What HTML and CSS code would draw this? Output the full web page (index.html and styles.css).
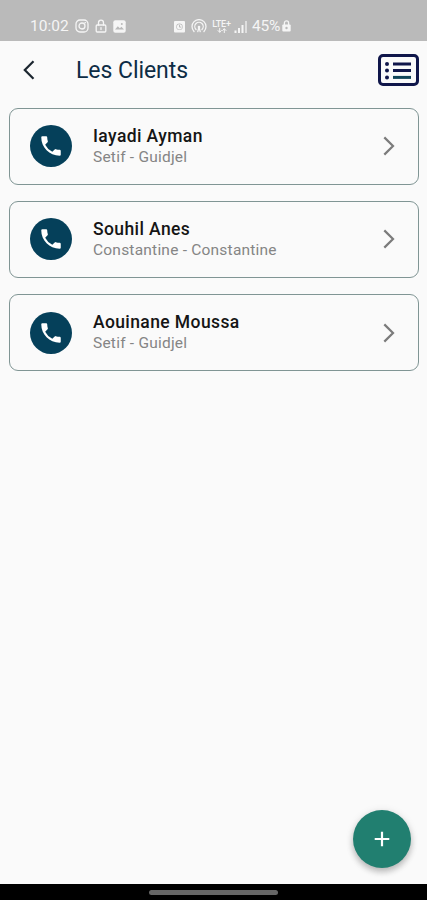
FILE: index.html
```html
<!DOCTYPE html>
<html lang="fr">
<head>
<meta charset="utf-8">
<title>Les Clients</title>
<link rel="stylesheet" href="styles.css">
</head>
<body>
<svg width="0" height="0" class="defs">
  <symbol id="phone" viewBox="0 0 24 24"><path d="M20 15.5c-1.25 0-2.45-.2-3.57-.57a1 1 0 0 0-1.02.24l-2.2 2.2a15.05 15.05 0 0 1-6.59-6.58l2.2-2.21a.96.96 0 0 0 .25-1A11.36 11.36 0 0 1 8.5 4a1 1 0 0 0-1-1H4a1 1 0 0 0-1 1c0 9.39 7.61 17 17 17a1 1 0 0 0 1-1v-3.5a1 1 0 0 0-1-1z"/></symbol>
  <symbol id="chevron" viewBox="0 0 12 20"><path d="M1.3 1.4 10 10 1.3 18.6"/></symbol>
</svg>
<div class="screen">
  <div class="status">
    <span class="time">10:02</span>
    <svg class="s-insta" viewBox="0 0 14 14" width="14" height="14"><rect x="1" y="1" width="12" height="12" rx="4"/><circle cx="7" cy="7" r="3"/><path d="M10 3.7h.5"/></svg>
    <svg class="s-lock" viewBox="0 0 12 14" width="12" height="14"><rect x="1.2" y="6" width="9.6" height="7" rx="1"/><path d="M3.5 6V3.7a2.5 2.5 0 0 1 5 0V6M6 8.6v2"/></svg>
    <svg class="s-image" viewBox="0 0 13 13" width="13" height="13"><rect class="solid" x=".3" y=".3" width="12.4" height="12.4" rx="2"/><path class="cut" d="m2 9.5 2.8-3.2 2 2 1.6-1.5L11 9.5z"/><circle class="cut" cx="8.8" cy="4" r="1"/></svg>
    <svg class="s-alarm" viewBox="0 0 13 13" width="13" height="13"><rect class="solid" x="1" y="1" width="11" height="11.5" rx="1"/><circle class="cut" cx="6.5" cy="6.8" r="3.2"/><circle class="solid" cx="6.5" cy="6.8" r="2.6"/><path class="hand" d="M6.5 5.2v1.9H8"/></svg>
    <svg class="s-hotspot" viewBox="0 0 16 14" width="16" height="14"><path d="M3 12.5a7 7 0 1 1 10 0M5 10.5a4.2 4.2 0 1 1 6 0M6.8 12.7 8 8l1.2 4.7"/><circle class="solid" cx="8" cy="8" r="1.3"/></svg>
    <span class="lte"><span>LTE+</span><svg viewBox="0 0 10 5" width="10" height="5"><path d="M2.7 0v4M1 2.5l1.7 1.8 1.7-1.8M7.3 5V1M5.6 2.5 7.3.7 9 2.5"/></svg></span>
    <svg class="s-signal" viewBox="0 0 14 13" width="14" height="13"><path d="M1.5 10.5V13M5 8v5M8.5 5v8"/><path class="faint" d="M12 1v12"/></svg>
    <span class="battery">45%</span>
    <svg class="s-charge" viewBox="0 0 9 12" width="9" height="12"><rect class="solid" x=".3" y="4.5" width="8.4" height="7" rx="1"/><path d="M2.4 5V3a2.1 2.1 0 0 1 4.2 0v2"/><circle class="cut" cx="4.5" cy="8" r="1.2"/></svg>
  </div>
  <header class="appbar">
    <svg class="back" viewBox="0 0 12 20" width="12" height="20"><path d="M10.5 1.2 1.8 10l8.7 8.8"/></svg>
    <h1>Les Clients</h1>
    <svg class="list-icon" viewBox="0 0 41 32" width="41" height="32"><rect x="1.5" y="1.5" width="38" height="29" rx="3.5"/><path d="M15 10h18M15 16.6h18"/><path class="teal" d="M15 23.4h18"/><path class="dots" d="M9 10h0M9 16.6h0M9 23.4h0"/></svg>
  </header>
  <main class="clients">
    <article class="card">
      <span class="call"><svg width="26" height="26"><use href="#phone"/></svg></span>
      <div class="info"><h2>Iayadi Ayman</h2><p>Setif - Guidjel</p></div>
      <svg class="chev" width="12" height="20"><use href="#chevron"/></svg>
    </article>
    <article class="card">
      <span class="call"><svg width="26" height="26"><use href="#phone"/></svg></span>
      <div class="info"><h2>Souhil Anes</h2><p>Constantine - Constantine</p></div>
      <svg class="chev" width="12" height="20"><use href="#chevron"/></svg>
    </article>
    <article class="card">
      <span class="call"><svg width="26" height="26"><use href="#phone"/></svg></span>
      <div class="info"><h2>Aouinane Moussa</h2><p>Setif - Guidjel</p></div>
      <svg class="chev" width="12" height="20"><use href="#chevron"/></svg>
    </article>
  </main>
  <button class="fab" aria-label="Ajouter"><svg viewBox="0 0 16 16" width="16" height="16"><path d="M8 .7v14.6M.7 8h14.6"/></svg></button>
  <div class="navbar"><span></span></div>
</div>
</body>
</html>
```
FILE: styles.css
```css
* { box-sizing: border-box; margin: 0; padding: 0; }
body { font-family: Roboto, "Liberation Sans", sans-serif; background: #fafafa; }
.defs { position: absolute; }
svg { display: block; flex: none; }
.screen { position: relative; width: 427px; height: 900px; display: flex; flex-direction: column; overflow: hidden; background: #fafafa; }

.status { height: 41px; flex: none; display: flex; align-items: center; padding: 11px 0 0 30px; background: #bababa; color: #f5f5f5; }
.status svg { fill: none; stroke: #f5f5f5; stroke-width: 1.3; stroke-linecap: round; }
.status .solid { fill: #f5f5f5; stroke: none; }
.status .cut { fill: #bababa; stroke: none; }
.status .hand { stroke: #bababa; stroke-width: 1; }
.status .faint { stroke: #dedede; }
.status .s-signal { stroke-width: 2; stroke-linecap: butt; margin-left: 2px; }
.time { width: 45px; font-size: 15.5px; white-space: nowrap; }
.s-lock { margin-left: 6px; }
.s-image { margin-left: 6px; }
.s-alarm { margin-left: 47px; }
.s-hotspot { margin-left: 5px; }
.lte { width: 21px; margin-left: 4px; display: flex; flex-direction: column; align-items: center; font-size: 9px; font-weight: 500; line-height: 8px; letter-spacing: -.2px; }
.lte svg { stroke-width: 1; }
.battery { width: 31px; margin-left: 4px; font-size: 15.5px; letter-spacing: -.2px; }
.s-charge { margin-left: -1px; }

.appbar { height: 66.7px; flex: none; display: flex; align-items: center; padding: 0 8px 8px 23px; }
.back { fill: none; stroke: #1c2630; stroke-width: 2.2; }
h1 { flex: 1; margin-left: 41px; padding-top: 2px; font-size: 23px; line-height: 28px; font-weight: 400; letter-spacing: -.05px; color: #0d2c45; }
.list-icon { fill: none; stroke: #10164a; stroke-width: 3; }
.list-icon .teal { stroke: #104558; }
.list-icon .dots { stroke-width: 4; stroke-linecap: round; }

.clients { flex: 1; display: flex; flex-direction: column; gap: 16.2px; padding: 0 8px 0 9px; }
.card { height: 77px; flex: none; display: flex; align-items: center; padding: 0 23px 0 20px; border: 1.3px solid #809594; border-radius: 9px; }
.call { width: 42px; height: 42px; flex: none; display: flex; align-items: center; justify-content: center; border-radius: 50%; background: #05405a; fill: #fff; }
.info { flex: 1; margin-left: 21px; padding-top: 1px; white-space: nowrap; }
h2 { font-size: 17.5px; line-height: 21px; font-weight: 500; letter-spacing: .4px; color: #151515; }
p { font-size: 15.5px; line-height: 21px; letter-spacing: .22px; color: #858585; }
.chev { fill: none; stroke: #7b7b7b; stroke-width: 2.2; }

.fab { position: absolute; left: 353px; top: 810px; width: 58px; height: 58px; display: flex; align-items: center; justify-content: center; border: 0; border-radius: 50%; background: #217f70; box-shadow: 0 4px 6px rgba(0,0,0,.22), 0 1px 8px rgba(0,0,0,.1); }
.fab svg { fill: none; stroke: #fff; stroke-width: 2.2; }
.navbar { height: 16px; flex: none; display: flex; justify-content: center; padding-top: 6px; background: #000; }
.navbar span { width: 129px; height: 5px; border-radius: 3px; background: #666; }
```
